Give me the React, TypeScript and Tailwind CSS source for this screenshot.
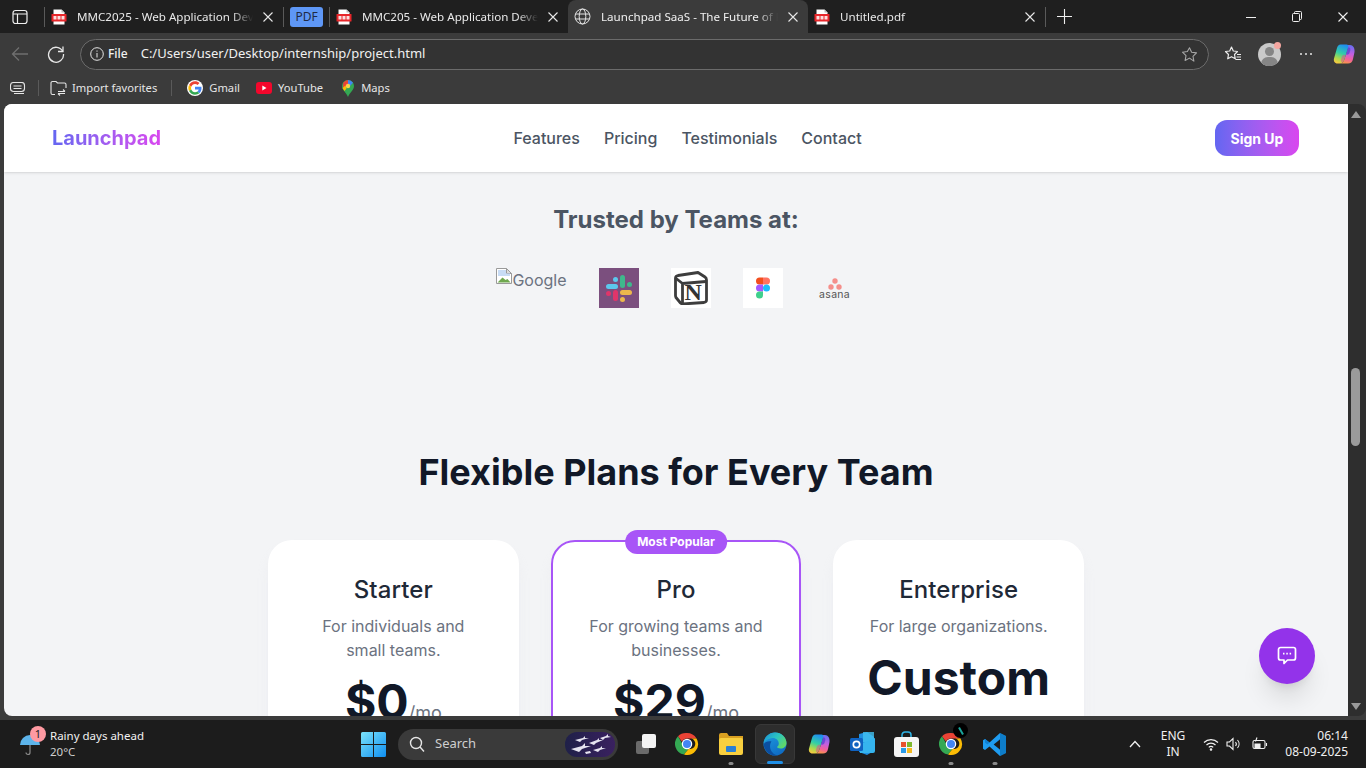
import React from "react";

const ui = { fontFamily: '"Noto Sans", "Open Sans", sans-serif' };
const inter = { fontFamily: 'Inter, sans-serif' };

function PdfIcon() {
  return (
    <svg width="16" height="16" viewBox="0 0 16 16" className="shrink-0">
      <path d="M2.5 0.5h8l3 3v12h-11z" fill="#fff" />
      <path d="M10.5 0.5v3h3z" fill="#bbb" />
      <rect x="0.5" y="5" width="15" height="7.5" rx="0.5" fill="#e8262a" />
      <rect x="2.5" y="7" width="3" height="3.5" fill="#fff" opacity="0.85" />
      <rect x="6.5" y="7" width="3" height="3.5" fill="#fff" opacity="0.85" />
      <rect x="10.5" y="7" width="3" height="3.5" fill="#fff" opacity="0.85" />
    </svg>
  );
}

function Cross({ size = 10, color = "#e8e8e8" }: { size?: number; color?: string }) {
  return (
    <svg width={size} height={size} viewBox="0 0 10 10" className="shrink-0">
      <path d="M0.5 0.5l9 9M9.5 0.5l-9 9" stroke={color} strokeWidth="1.1" />
    </svg>
  );
}

function Sep() {
  return <div className="w-px h-5 bg-[#5a5a5a] shrink-0" />;
}

function Tab({ icon, title, w, pl, gap, closeRight = 8 }: { icon: React.ReactNode; title: string; w: string; pl: string; gap: string; closeRight?: number }) {
  return (
    <div className={`flex items-center h-full shrink-0 ${w} ${pl} ${gap}`}>
      {icon}
      <span className="flex-1 min-w-0 overflow-hidden whitespace-nowrap text-[11.6px] text-[#e9e9e9] [mask-image:linear-gradient(to_right,black_88%,transparent)]">
        {title}
      </span>
      <span className="shrink-0" style={{ marginRight: closeRight }}>
        <Cross />
      </span>
    </div>
  );
}

function Globe() {
  return (
    <svg width="17" height="17" viewBox="0 0 17 17" fill="none" stroke="#e6e6e6" strokeWidth="1" className="shrink-0">
      <circle cx="8.5" cy="8.5" r="7.5" />
      <ellipse cx="8.5" cy="8.5" rx="3.3" ry="7.5" />
      <path d="M1.5 6h14M1.5 11h14" />
    </svg>
  );
}

function GoogleG({ size = 16 }: { size?: number }) {
  return (
    <svg width={size} height={size} viewBox="0 0 48 48" className="shrink-0">
      <circle cx="24" cy="24" r="24" fill="#fff" />
      <path fill="#EA4335" d="M24 12c3 0 5.600 1 7.700 3l5.700-5.700C33.900 6 29.400 4 24 4 16.200 4 9.500 8.500 6.200 15l6.700 5.200C14.500 15.400 18.900 12 24 12z" />
      <path fill="#4285F4" d="M43.500 24.500c0-1.400-.1-2.700-.4-4H24v8h11c-.5 2.500-1.900 4.700-4.100 6.100l6.400 5c3.900-3.500 6.200-8.900 6.200-15.100z" />
      <path fill="#FBBC05" d="M12.900 28.800c-.4-1.200-.7-3-.7-4.800s.3-3.300.7-3.800L6.200 15C4.800 17.700 4 20.800 4 24s.8 6.300 2.200 9z" />
      <path fill="#34A853" d="M24 44c5.400 0 9.900-1.800 13.300-4.400l-6.400-5c-1.800 1.200-4.100 1.900-6.900 1.900-5.100 0-9.500-3.400-11.100-8.200L6.200 33C9.500 39.500 16.200 44 24 44z" />
    </svg>
  );
}

function ChromeIcon({ size = 24 }: { size?: number }) {
  return (
    <svg width={size} height={size} viewBox="0 0 48 48" className="shrink-0">
      <path fill="#EA4335" d="M24 2a22 22 0 0 1 19 11H24a11 11 0 0 0-10 6.500L6 8.500A22 22 0 0 1 24 2z" />
      <path fill="#34A853" d="M6 8.500l9.500 16.500a10 10 0 0 0 12 8.500L18 45.200A22 22 0 0 1 6 8.500z" />
      <path fill="#FBBC05" d="M43 13a22 22 0 0 1-25 32.200l9.500-11.700a10 10 0 0 0 5-20.500z" />
      <circle cx="24" cy="24" r="10.500" fill="#fff" />
      <circle cx="24" cy="24" r="8" fill="#4285F4" />
    </svg>
  );
}

function CopilotIcon({ id, size = 24 }: { id: string; size?: number }) {
  return (
    <svg width={size} height={size} viewBox="0 0 24 24" className="shrink-0">
      <defs>
        <linearGradient id={`${id}a`} x1="0.6" y1="0" x2="0.3" y2="1">
          <stop offset="0" stopColor="#1f8ff0" />
          <stop offset="0.45" stopColor="#32cfa6" />
          <stop offset="0.75" stopColor="#a8d94f" />
          <stop offset="1" stopColor="#f8c93e" />
        </linearGradient>
        <linearGradient id={`${id}b`} x1="0.6" y1="0" x2="0.4" y2="1">
          <stop offset="0" stopColor="#6a6df0" />
          <stop offset="0.45" stopColor="#c45fe0" />
          <stop offset="0.75" stopColor="#f2609a" />
          <stop offset="1" stopColor="#f7964a" />
        </linearGradient>
      </defs>
      <path d="M15 3h3c3 0 5 3 4.500 7L21 17c-.5 3-2.500 4.500-5 4.500H8c2 0 3.500-1.500 4.500-4.500L16 6c.3-1.200-.2-2.400-1-3z" fill={`url(#${id}b)`} />
      <path d="M8.500 2.500h6c1.500 0 2.300 1.200 1.800 2.800L12.500 17c-.8 2.700-2.300 4.500-4.500 4.500H5.500C2.800 21.500 1.300 19 2 16.500L5 6c.6-2.200 1.800-3.500 3.500-3.500z" fill={`url(#${id}a)`} />
      <path d="M16.300 5.300L14 12.500c1.500.5 3 0 3.500-1.500l.8-3c.3-1.500-.6-2.700-2-2.700z" fill="#5a3fd0" opacity="0.75" />
      <path d="M12.500 17l1.200-4c-1.700-.5-3-.1-3.700 1.500l-1 3c-.4 1.500.2 2.900 1.400 3.300.9-1 1.600-2.300 2.100-3.800z" fill="#e0508a" opacity="0.55" />
    </svg>
  );
}

function Tabs() {
  return (
    <div className="flex items-center h-[33px] bg-[#1f1f1f] shrink-0">
      <div className="w-[44px] h-full flex items-center justify-center shrink-0 pr-[4px]">
        <svg width="16" height="16" viewBox="0 0 16 16" fill="none" stroke="#efefef" strokeWidth="1.2">
          <rect x="1" y="1.500" width="14" height="13" rx="2.500" />
          <path d="M1 5h14M5.500 5v9.500" />
        </svg>
      </div>
      <Sep />
      <Tab icon={<PdfIcon />} title="MMC2025 - Web Application Development" w="w-[238px]" pl="pl-[6px]" gap="gap-[10px]" closeRight={10} />
      <Sep />
      <div className="ml-[6px] mr-[6px] w-[33px] h-5 rounded-[3px] bg-[#5e97f6] text-[12px] text-[#1f2a44] flex items-center justify-center shrink-0">PDF</div>
      <Sep />
      <Tab icon={<PdfIcon />} title="MMC205 - Web Application Development" w="w-[238px]" pl="pl-[6px]" gap="gap-[10px]" closeRight={10} />
      <div className="flex items-center h-full w-[240px] shrink-0 pl-[6px] pr-[10px] gap-[10px] bg-[#3b3b3b] rounded-t-lg self-end">
        <Globe />
        <span className="flex-1 min-w-0 overflow-hidden whitespace-nowrap text-[11.6px] text-[#f0f0f0] [mask-image:linear-gradient(to_right,black_88%,transparent)]">Launchpad SaaS - The Future of Productivity</span>
        <Cross />
      </div>
      <Tab icon={<PdfIcon />} title="Untitled.pdf" w="w-[237px]" pl="pl-[6px]" gap="gap-[10px]" closeRight={10} />
      <Sep />
      <div className="w-[37px] flex items-center justify-center shrink-0">
        <svg width="15" height="15" viewBox="0 0 15 15" stroke="#efefef" strokeWidth="1.100"><path d="M7.500 0v15M0 7.500h15" /></svg>
      </div>
      <div className="flex-1" />
      <div className="flex items-center h-full gap-[36px] pr-[18px]">
        <svg width="10" height="10" viewBox="0 0 10 10" stroke="#efefef"><path d="M0 5.500h10" /></svg>
        <svg width="10" height="11" viewBox="0 0 10 11" fill="none" stroke="#efefef"><rect x="0.500" y="2.500" width="7" height="8" rx="1" /><path d="M2.500 2.500v-1a1 1 0 0 1 1-1h5a1 1 0 0 1 1 1v6a1 1 0 0 1-1 1h-1" /></svg>
        <Cross size={10} color="#f0f0f0" />
      </div>
    </div>
  );
}

function Toolbar() {
  return (
    <div className="flex items-center h-[42px] bg-[#3b3b3b] shrink-0 pl-[11px] pr-[10px]">
      <svg width="18" height="16" viewBox="0 0 18 16" fill="none" stroke="#6f6f6f" strokeWidth="1.300"><path d="M17 8H1.500M8 1.500L1.500 8 8 14.500" /></svg>
      <div className="w-[18px]" />
      <svg width="18" height="18" viewBox="0 0 18 18" fill="none" stroke="#e8e8e8" strokeWidth="1.300"><path d="M15.800 6.500A7.500 7.500 0 1 0 16.500 9" /><path d="M16 1.500V6.500H11" /></svg>
      <div className="ml-[15px] w-[1130px] h-[31px] rounded-full border border-[#6b6b6b] bg-[#333333] flex items-center pl-[9px] pr-[10px]">
        <svg width="14" height="14" viewBox="0 0 14 14" fill="none" stroke="#e6e6e6"><circle cx="7" cy="7" r="6.300" /><path d="M7 6v4.500M7 3.500v1.200" /></svg>
        <span className="ml-[4px] text-[12px] font-medium text-[#f0f0f0]">File</span>
        <span className="ml-[13px] text-[13px] text-[#f0f0f0]">C:/Users/user/Desktop/internship/project.html</span>
        <div className="flex-1" />
        <svg width="17" height="17" viewBox="0 0 24 24" fill="none" stroke="#a8a8a8" strokeWidth="1.500" strokeLinejoin="round"><path d="M12 2.500l3 6.300 6.900.9-5 4.800 1.300 6.900L12 17.100l-6.200 3.300 1.300-6.900-5-4.800 6.900-.9z" /></svg>
      </div>
      <div className="ml-[15px]">
        <svg width="18" height="18" viewBox="0 0 18 18" fill="none" stroke="#ececec" strokeWidth="1.200" strokeLinejoin="round"><path d="M7.500 2l1.800 4 4.200.5-3 3 .8 4.300-3.800-2.100-3.800 2.100.8-4.300-3-3 4.200-.5z" /><path d="M13 9.500h4M12.500 12h4.500M11.500 14.500h5.500" /></svg>
      </div>
      <div className="ml-[16px] relative w-[23px] h-[23px] rounded-full bg-[#c9c9c9] overflow-hidden shrink-0">
        <div className="absolute left-[7px] top-[4px] w-[9px] h-[9px] rounded-full bg-[#858585]" />
        <div className="absolute left-[3px] top-[14px] w-[17px] h-[14px] rounded-full bg-[#858585]" />
      </div>
      <div className="w-[7px] h-[7px] rounded-full bg-[#f4a6a0] -ml-[7px] -mt-[18px] z-10 shrink-0" />
      <div className="ml-[19px] flex gap-[3px]">
        <div className="w-[2px] h-[2px] rounded-full bg-[#e8e8e8]" />
        <div className="w-[2px] h-[2px] rounded-full bg-[#e8e8e8]" />
        <div className="w-[2px] h-[2px] rounded-full bg-[#e8e8e8]" />
      </div>
      <div className="ml-[20px]"><CopilotIcon id="cpTop" size={24} /></div>
    </div>
  );
}

function Bookmark({ icon, label, ml }: { icon: React.ReactNode; label: string; ml: string }) {
  return (
    <div className={`flex items-center gap-[6px] ${ml}`}>
      {icon}
      <span className="text-[11.2px] text-[#e6e6e6]">{label}</span>
    </div>
  );
}

function Bookmarks() {
  return (
    <div className="flex items-center h-[29px] bg-[#3b3b3b] shrink-0 pl-[10px] pb-[3px]">
      <svg width="16" height="12" viewBox="0 0 16 12" fill="none" stroke="#e6e6e6" strokeWidth="1.100"><rect x="0.500" y="0.500" width="14" height="9" rx="3" /><path d="M3.500 4h8M3.500 6.500h8M4 11.500h10" /></svg>
      <div className="w-px h-4 bg-[#5a5a5a] ml-[12px]" />
      <div className="ml-[11px] flex items-center gap-[5px]">
        <svg width="17" height="16" viewBox="0 0 17 16" fill="none" stroke="#e6e6e6" strokeWidth="1.100"><path d="M1 13V3a1.500 1.500 0 0 1 1.500-1.500H6L7.500 3h7A1.500 1.500 0 0 1 16 4.500V8M1 13a1.500 1.500 0 0 0 1.500 1.500H5" /><path d="M8 11.500h7M13 9.500l2 2M8 13.500h7M10 15.500l-2-2" /></svg>
        <span className="text-[11.2px] text-[#e6e6e6]">Import favorites</span>
      </div>
      <div className="w-px h-4 bg-[#5a5a5a] ml-[14px]" />
      <Bookmark ml="ml-[15px]" icon={<GoogleG size={16} />} label="Gmail" />
      <Bookmark
        ml="ml-[16px]"
        label="YouTube"
        icon={
          <svg width="16" height="12" viewBox="0 0 16 12"><rect width="16" height="12" rx="3" fill="#f4072c" /><path d="M6.300 3.500v5l4.200-2.500z" fill="#fff" /></svg>
        }
      />
      <Bookmark
        ml="ml-[18px]"
        label="Maps"
        icon={
          <svg width="14" height="17" viewBox="0 0 14 17">
            <path d="M7 0a6 6 0 0 1 6 6c0 4-4 6-6 11C5 12 1 10 1 6a6 6 0 0 1 6-6z" fill="#34A853" />
            <path d="M2.500 2.500A6 6 0 0 1 7 0v4.500L3 8.500A6 6 0 0 1 2.500 2.500z" fill="#EA4335" />
            <path d="M7 0a6 6 0 0 1 5 2.800L9 6 7 4.500z" fill="#4285F4" />
            <path d="M1.500 8l3-2.500 1 3-2 2.500z" fill="#FBBC05" />
            <circle cx="7" cy="6" r="2.200" fill="#f6d44b" />
          </svg>
        }
      />
    </div>
  );
}

function LogoBox({ bg, children }: { bg: string; children: React.ReactNode }) {
  return <div className={`w-10 h-10 shrink-0 flex items-center justify-center ${bg}`}>{children}</div>;
}

function Logos() {
  return (
    <div className="mt-[32px] flex items-start justify-center gap-8 pr-[1px]">
      <div className="h-10 flex items-start text-[16px] text-[#6b7280] leading-[24px]">
        <svg width="16" height="16" viewBox="0 0 16 16" className="shrink-0">
          <path d="M0.500 0.500h10l5 5v10h-15z" fill="#fff" stroke="#9a9a9a" />
          <path d="M10.500 0.500v5h5z" fill="#dcdcdc" stroke="#9a9a9a" />
          <path d="M2 2h8v3.500H14V8H2z" fill="#c8dcf5" />
          <path d="M1.500 14.500l5-5 3 2.500 2-1 3 3.500z" fill="#6fa84f" />
        </svg>
        <span>Google</span>
      </div>
      <LogoBox bg="bg-[#7b4f7e]">
        <svg width="30" height="30" viewBox="0 0 30 30">
          <rect x="2" y="11" width="12" height="5" rx="2.500" fill="#5cc8ee" />
          <rect x="9" y="4" width="5" height="5" rx="2.500" fill="#5cc8ee" />
          <rect x="16" y="2" width="5" height="13" rx="2.500" fill="#3fb88c" />
          <rect x="23" y="9" width="5" height="5" rx="2.500" fill="#3fb88c" />
          <rect x="16" y="17" width="12" height="5" rx="2.500" fill="#ecb84c" />
          <rect x="16" y="24" width="5" height="5" rx="2.500" fill="#ecb84c" />
          <rect x="9" y="17" width="5" height="11" rx="2.500" fill="#e0356a" />
          <rect x="2" y="18" width="5" height="5" rx="2.500" fill="#e0356a" />
        </svg>
      </LogoBox>
      <LogoBox bg="bg-white">
        <div className="relative w-[34px] h-[34px]">
          <svg width="34" height="34" viewBox="0 0 34 34" fill="#fff" stroke="#3d3d3d" strokeWidth="2.800" strokeLinejoin="round" className="absolute inset-0">
            <path d="M1.500 7Q1.500 5 4 4.500L24 1.500L31 6Q32.500 7 32.500 9V29Q32.500 31 30 31.500L9 33Q7.500 33 6.500 32L2 26.500Q1.500 25.500 1.500 24.500Z" />
            <path d="M1.500 7L8.500 12.500L32 10.500M8.500 12.500V33" fill="none" />
          </svg>
          <span className="absolute left-[11px] top-[9px] text-[24px] leading-[24px] font-bold text-[#333]" style={{ fontFamily: '"Liberation Serif", serif' }}>N</span>
        </div>
      </LogoBox>
      <LogoBox bg="bg-white">
        <svg width="14" height="22" viewBox="0 0 14 21">
          <path d="M7 0H3.500a3.500 3.500 0 0 0 0 7H7z" fill="#f24e1e" />
          <path d="M7 0h3.500a3.500 3.500 0 0 1 0 7H7z" fill="#ff7262" />
          <path d="M7 7H3.500a3.500 3.500 0 0 0 0 7H7z" fill="#a259ff" />
          <circle cx="10.500" cy="10.500" r="3.500" fill="#1abcfe" />
          <path d="M3.500 14H7v3.500A3.500 3.500 0 1 1 3.500 14z" fill="#3ed08c" />
        </svg>
      </LogoBox>
      <div className="w-10 h-10 shrink-0 flex flex-col items-center justify-center">
        <svg width="14" height="12" viewBox="0 0 14 12" className="mt-[2px]" fill="#f58f8b">
          <circle cx="7" cy="3" r="2.700" /><circle cx="3" cy="9" r="2.700" /><circle cx="11" cy="9" r="2.700" />
        </svg>
        <span className="text-[10.500px] leading-[10px] text-[#555] tracking-[0.3px]" style={inter}>asana</span>
      </div>
    </div>
  );
}

function Card({ title, desc, price, suffix, popular }: { title: string; desc: React.ReactNode; price: string; suffix?: string; popular?: boolean }) {
  return (
    <div className={`relative bg-white rounded-3xl border-2 p-8 text-center shadow-lg shadow-gray-200/40 ${popular ? "border-[#a855f7]" : "border-transparent"}`}>
      {popular && (
        <div className="absolute left-1/2 -translate-x-1/2 -top-[12px] h-6 px-3 rounded-full bg-[#a855f7] text-white text-[12px] font-bold flex items-center whitespace-nowrap">Most Popular</div>
      )}
      <h3 className="text-2xl font-medium tracking-[0.1px] text-[#1f2937] mb-2">{title}</h3>
      <p className="text-base text-[#6b7280] mb-4">{desc}</p>
      <div className="text-5xl font-bold text-[#111827]">
        {price}
        {suffix && <span className="text-lg font-normal text-[#6b7280]">{suffix}</span>}
      </div>
      <div className="h-[200px]" />
    </div>
  );
}

function Page() {
  return (
    <div className="flex-1 min-w-0 bg-[#f3f4f6] relative overflow-hidden rounded-tl-lg rounded-bl-lg" style={inter}>
      <header className="h-[68px] bg-white shadow-sm relative z-10">
        <div className="mx-auto max-w-7xl h-full px-4 flex items-center justify-between">
          <div className="text-[20px] font-bold bg-gradient-to-r from-[#6366f1] to-[#d946ef] bg-clip-text text-transparent">Launchpad</div>
          <nav className="flex items-center gap-6 text-base font-medium text-[#4b5563] pr-[1px]">
            <span>Features</span>
            <span>Pricing</span>
            <span>Testimonials</span>
            <span>Contact</span>
          </nav>
          <button className="h-9 w-[84px] mr-[1px] rounded-xl bg-gradient-to-r from-[#6366f1] to-[#d946ef] text-white text-[14px] font-bold">Sign Up</button>
        </div>
      </header>
      <section className="pt-[32px] text-center">
        <h2 className="text-2xl font-bold text-[#4b5563]">Trusted by Teams at:</h2>
        <Logos />
      </section>
      <section className="mt-[144px]">
        <h2 className="text-4xl font-bold text-[#111827] text-center">Flexible Plans for Every Team</h2>
        <div className="mt-[48px] mx-auto w-[816px] grid grid-cols-3 gap-8">
          <Card title="Starter" desc={<>For individuals and<br />small teams.</>} price="$0" suffix="/mo" />
          <Card title="Pro" popular desc={<>For growing teams and<br />businesses.</>} price="$29" suffix="/mo" />
          <Card title="Enterprise" desc="For large organizations." price="Custom" />
        </div>
      </section>
      <button className="absolute right-[33px] bottom-[32px] w-14 h-14 rounded-full bg-[#9333ea] shadow-xl flex items-center justify-center z-20">
        <svg width="20" height="20" viewBox="0 0 20 20" fill="none" stroke="#fff" strokeWidth="1.700" strokeLinejoin="round">
          <path d="M3.500 1.500h13a2 2 0 0 1 2 2v8.500a2 2 0 0 1-2 2h-6l-3.500 3.500v-3.500h-3.500a2 2 0 0 1-2-2V3.500a2 2 0 0 1 2-2z" />
          <path d="M6 7.700h1.500M9.300 7.700h1.500M12.600 7.700h1.500" />
        </svg>
      </button>
    </div>
  );
}

function ScrollBar() {
  return (
    <div className="w-[18px] shrink-0 bg-[#2e2e2e] flex flex-col items-center rounded-r-lg pl-[1px] pr-[4px] pt-[7px] pb-[6px]">
      <div className="w-0 h-0 border-l-[5px] border-r-[5px] border-b-[7px] border-l-transparent border-r-transparent border-b-[#9a9a9a]" />
      <div className="mt-[250px] w-[9px] h-[78px] rounded-full bg-[#9b9b9b]" />
      <div className="flex-1" />
      <div className="w-0 h-0 border-l-[5px] border-r-[5px] border-t-[7px] border-l-transparent border-r-transparent border-t-[#9a9a9a]" />
    </div>
  );
}

function Dot({ wide }: { wide?: boolean }) {
  return <div className={`h-[3px] rounded-full ${wide ? "w-4 bg-[#1f8fe6]" : "w-[5px] bg-[#8a8a8a]"}`} />;
}

function Slot({ w, ml, children, dot, active }: { w: string; ml: string; children: React.ReactNode; dot?: boolean; active?: boolean }) {
  return (
    <div className={`relative h-10 flex items-center justify-center shrink-0 rounded-md ${w} ${ml} ${active ? "bg-[#2d2d2d] border border-[#383838]" : ""}`}>
      {children}
      {dot && <div className="absolute bottom-0 left-1/2 -translate-x-1/2 translate-y-[1px]"><Dot wide={active} /></div>}
    </div>
  );
}

function Taskbar() {
  return (
    <div className="h-[48px] bg-[#1c1c1c] shrink-0 flex items-center text-white">
      <div className="w-[50px] h-full relative shrink-0">
        <svg width="22" height="22" viewBox="0 0 22 22" className="absolute left-[19px] top-[14px]">
          <path d="M1 11a10 10 0 0 1 20 0z" fill="#5db4ea" />
          <path d="M11 11v7.500a2 2 0 0 1-4 0" fill="none" stroke="#8a8a8a" strokeWidth="1.200" />
        </svg>
        <div className="absolute left-[30px] top-[6px] w-4 h-4 rounded-full bg-[#ff9aa2] text-[#222] text-[11px] flex items-center justify-center">1</div>
      </div>
      <div className="w-[311px] shrink-0 leading-[16px] text-[11.500px]">
        <div className="text-[#f2f2f2]">Rainy days ahead</div>
        <div className="text-[#cfcfcf]">20°C</div>
      </div>
      <svg width="25" height="25" viewBox="0 0 25 25" className="shrink-0">
        <defs>
          <linearGradient id="win" x1="0" y1="0" x2="1" y2="1"><stop offset="0" stopColor="#7be3fb" /><stop offset="1" stopColor="#0f8ef0" /></linearGradient>
        </defs>
        <path d="M0 1.500A1.500 1.500 0 0 1 1.500 0H12v12H0zM13 0h10.500A1.500 1.500 0 0 1 25 1.500V12H13zM0 13h12v12H1.500A1.500 1.500 0 0 1 0 23.500zM13 13h12v10.500a1.500 1.500 0 0 1-1.500 1.500H13z" fill="url(#win)" />
      </svg>
      <div className="ml-[12px] w-[220px] h-[31px] rounded-full bg-[#3a3a3a] flex items-center pl-[11px] pr-[3px] shrink-0">
        <svg width="16" height="16" viewBox="0 0 16 16" fill="none" stroke="#e6e6e6" strokeWidth="1.400"><circle cx="7" cy="7" r="5.500" /><path d="M11 11l4 4.500" /></svg>
        <span className="ml-[10px] text-[13px] text-[#cfcfcf]">Search</span>
        <div className="flex-1" />
        <svg width="50" height="25" viewBox="0 0 50 25">
          <defs>
            <linearGradient id="srch" x1="0" y1="0" x2="1" y2="0"><stop offset="0" stopColor="#1f2048" /><stop offset="1" stopColor="#3a2160" /></linearGradient>
          </defs>
          <rect width="50" height="25" rx="12" fill="url(#srch)" />
          <path d="M6 17l11-3 3-3 0 3 6 0-9 3-3 3zM10 8l8-2 2-2 0 2 4 0-7 2-2 2zM24 11l8-3 2-2 0 2 4 0-7 3-2 2zM28 18l7-2 2-2 0 2 4 0-6 2-2 2zM35 6l6-2 2-2 0 2 3 1-6 1-2 2zM20 20l5-1 1 2-5 1z" fill="#e6e4f0" />
        </svg>
      </div>
      <Slot w="w-[20px]" ml="ml-[18px]">
        <div className="relative w-[20px] h-[20px]">
          <div className="absolute left-0 bottom-0 w-[13px] h-[13px] rounded-[2px] bg-[#6a6a6a]" />
          <div className="absolute right-0 top-0 w-[14px] h-[14px] rounded-[2px] bg-[#f3f3f3]" />
        </div>
      </Slot>
      <Slot w="w-[24px]" ml="ml-[19px]"><ChromeIcon size={24} /></Slot>
      <Slot w="w-[24px]" ml="ml-[20px]" dot>
        <svg width="24" height="22" viewBox="0 0 24 22">
          <path d="M0 2a2 2 0 0 1 2-2h6l2 3h14v4H0z" fill="#d9a021" />
          <rect y="5" width="24" height="17" rx="2" fill="#f8cf3f" />
          <rect x="7" y="13" width="10" height="6" rx="1" fill="#2a7fd4" />
        </svg>
      </Slot>
      <Slot w="w-[40px]" ml="ml-[12px]" dot active>
        <svg width="24" height="24" viewBox="0 0 24 24">
          <defs>
            <linearGradient id="edgeA" x1="0" y1="0" x2="1" y2="0.6"><stop offset="0" stopColor="#1a8fd8" /><stop offset="0.55" stopColor="#2bc4c0" /><stop offset="1" stopColor="#5fd86a" /></linearGradient>
            <linearGradient id="edgeB" x1="0" y1="0" x2="0.6" y2="1"><stop offset="0" stopColor="#1fa0e0" /><stop offset="1" stopColor="#0f6cc4" /></linearGradient>
          </defs>
          <circle cx="12" cy="12" r="11.500" fill="url(#edgeB)" />
          <path d="M0.600 11C2 4.500 7 .5 12 .5c6.500 0 11.500 5 11.500 10.500 0 3.500-2.700 5.500-6 5.500-2 0-3.500-.7-3.500-1.700 1.200-.8 1.800-1.800 1.800-3.300C15.800 8 12.500 5.500 9 6 5 6.500 2 8.500 .6 11z" fill="url(#edgeA)" />
          <path d="M8.500 9.500C5.500 13.500 7 20.500 13.500 23.300 7 24.500 1.500 19 .6 12.500 2 10 5 8.800 8.500 9.500z" fill="#0b4fa0" />
        </svg>
      </Slot>
      <Slot w="w-[24px]" ml="ml-[12px]"><CopilotIcon id="cpBar" size={24} /></Slot>
      <Slot w="w-[26px]" ml="ml-[19px]">
        <svg width="26" height="24" viewBox="0 0 26 24">
          <path d="M9 2l8-2 7 5v14l-7 4-8-3z" fill="#1f8fe0" />
          <path d="M13 0h11v10H13z" fill="#42c0f0" opacity="0.8" />
          <path d="M10 12l15-6v13a2 2 0 0 1-2 2H10z" fill="#35b4ee" />
          <rect x="0" y="6" width="13" height="13" rx="1.500" fill="#0f62c0" />
          <circle cx="6.500" cy="12.500" r="3.200" fill="none" stroke="#fff" strokeWidth="1.700" />
        </svg>
      </Slot>
      <Slot w="w-[25px]" ml="ml-[18px]">
        <svg width="25" height="26" viewBox="0 0 25 26">
          <path d="M8 7V4a3 3 0 0 1 3-3h3a3 3 0 0 1 3 3v3" fill="none" stroke="#2eb5e8" strokeWidth="1.500" />
          <rect y="6" width="25" height="20" rx="3" fill="#f5f5f5" />
          <rect x="7" y="11" width="5" height="5" fill="#e8512f" />
          <rect x="13" y="11" width="5" height="5" fill="#7db82f" />
          <rect x="7" y="17" width="5" height="5" fill="#2a9ae8" />
          <rect x="13" y="17" width="5" height="5" fill="#f4b91e" />
        </svg>
      </Slot>
      <Slot w="w-[24px]" ml="ml-[20px]" dot>
        <ChromeIcon size={24} />
        <div className="absolute -right-[5px] -top-[1px] w-[15px] h-[15px] rounded-full bg-black flex items-center justify-center">
          <div className="w-[2px] h-[8px] bg-[#1aa59b] rotate-[-30deg]" />
        </div>
      </Slot>
      <Slot w="w-[25px]" ml="ml-[19px]" dot>
        <svg width="25" height="25" viewBox="0 0 25 25">
          <path d="M18 1l6 3v17l-6 3L7.500 14.500 3 18l-2-1.200v-8.600L3 7l4.500 3.500z" fill="#1f9cf0" />
          <path d="M18 1l6 3v17l-6 3zM18 7l-6 5.500 6 5.500z" fill="#0065a9" opacity="0.55" />
          <path d="M18 7.500l-6.300 5 6.300 5z" fill="#1c1c1c" />
          <path d="M3 7l4.500 3.500L5.500 12.500 3 10.500z" fill="#0f7fd1" />
        </svg>
      </Slot>
      <div className="flex-1" />
      <svg width="12" height="8" viewBox="0 0 12 8" fill="none" stroke="#f0f0f0" strokeWidth="1.300" className="shrink-0"><path d="M1 7l5-5.500L11 7" /></svg>
      <div className="ml-[18px] w-[28px] text-center text-[12px] leading-[16px] text-[#f0f0f0] shrink-0">ENG<br />IN</div>
      <svg width="16" height="13" viewBox="0 0 16 13" fill="none" stroke="#f0f0f0" strokeWidth="1.200" className="ml-[16px] shrink-0"><path d="M1 4.500a10 10 0 0 1 14 0M3.500 7a6.500 6.500 0 0 1 9 0M5.800 9.300a3 3 0 0 1 4.400 0" /><circle cx="8" cy="11.500" r="0.700" fill="#f0f0f0" /></svg>
      <svg width="16" height="14" viewBox="0 0 16 14" fill="none" stroke="#f0f0f0" strokeWidth="1.100" className="ml-[7px] shrink-0"><path d="M1 5v4h2.500L7 12.500v-11L3.500 5zM9.500 5a3 3 0 0 1 0 4M11.500 3a6 6 0 0 1 0 8" /></svg>
      <svg width="17" height="14" viewBox="0 0 17 14" fill="none" stroke="#f0f0f0" strokeWidth="1.100" className="ml-[10px] shrink-0"><rect x="1" y="3.500" width="12" height="8" rx="1.500" /><path d="M14.500 6v3" /><path d="M5 0.500L3.500 4.500M3 7h5v4H3z" fill="#f0f0f0" /></svg>
      <div className="ml-[9px] mr-[18px] w-[70px] text-right text-[12px] leading-[16px] text-[#f0f0f0] shrink-0">06:14<br />08-09-2025</div>
    </div>
  );
}

export default function App() {
  return (
    <div className="w-[1366px] h-[768px] flex flex-col overflow-hidden bg-[#3b3b3b]" style={ui}>
      <Tabs />
      <Toolbar />
      <Bookmarks />
      <div className="h-[612px] flex pl-[4px] shrink-0">
        <Page />
        <ScrollBar />
      </div>
      <div className="h-[4px] shrink-0" />
      <Taskbar />
    </div>
  );
}
